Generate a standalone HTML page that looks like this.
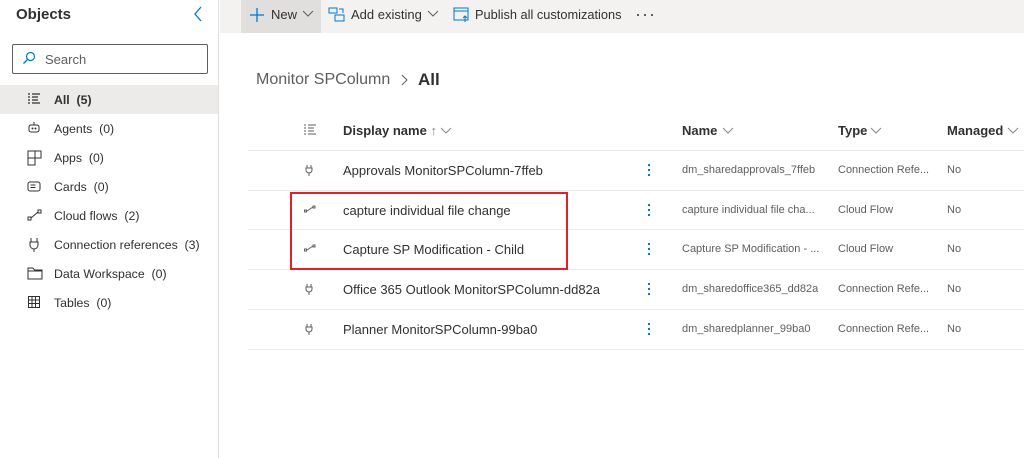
<!DOCTYPE html>
<html><head><style>
*{margin:0;padding:0;box-sizing:border-box}
body{width:1024px;height:458px;overflow:hidden;background:#fff;font-family:"Liberation Sans",sans-serif;color:#323130;position:relative;font-size:13px}
.a{position:absolute;white-space:nowrap}
.side{position:absolute;left:0;top:0;width:219px;height:458px;border-right:1px solid #e1dfdd;background:#fff}
.item{position:absolute;left:0;width:218px;height:29px;font-size:12.3px}
.item span{position:absolute;left:54px;top:8px}
.item svg{position:absolute;left:27px;top:7px}
.tb{position:absolute;left:220px;top:0;width:804px;height:33px;background:#f3f2f1}
.hl{position:absolute;left:248px;width:776px;height:1px;background:#edebe9}
.dots{position:absolute;width:3px;font-size:0}
.dots i{display:block;width:2px;height:2px;background:#0078d4;margin-bottom:3px}
.cell{font-size:11px;color:#605e5c}
</style></head><body>
<div class="side">
<div class="a" style="left:16px;top:6px;font-size:15px;font-weight:bold">Objects</div>
<svg class="a" style="left:193px;top:6px" width="10" height="16"><path d="M8 1L2 8l6 7" stroke="#0078d4" stroke-width="1.3" fill="none"/></svg>
<div class="a" style="left:12px;top:44px;width:196px;height:30px;border:1px solid #605e5c;border-radius:2px"></div>
<svg class="a" style="left:22px;top:51px" width="14" height="14"><circle cx="8.5" cy="5.5" r="4" stroke="#0078d4" stroke-width="1.2" fill="none"/><path d="M5.5 8.5L1.5 12.5" stroke="#0078d4" stroke-width="1.3"/></svg>
<div class="a" style="left:45px;top:52px;color:#605e5c">Search</div>
<div class="item" style="top:85px;background:#edebe9"><svg width="14" height="14"><path d="M1 2h2M1 5h2M1 8h2M1 11h2M5 2h8M5 5h6M5 8h6M5 11h8" stroke="#323130" stroke-width="1.2"/></svg><span style="font-weight:bold">All&nbsp; (5)</span></div>
<div class="item" style="top:114px"><svg width="14" height="14"><rect x="2" y="4" width="10" height="7" rx="2" stroke="#323130" fill="none"/><circle cx="5.5" cy="7.5" r="1" fill="#323130"/><circle cx="8.5" cy="7.5" r="1" fill="#323130"/><path d="M7 1v3" stroke="#323130"/></svg><span>Agents&nbsp; (0)</span></div>
<div class="item" style="top:143px"><svg width="16" height="16"><path d="M1 1h13v7H8v7H1zM1 8h7M8 1v7" stroke="#323130" fill="none"/></svg><span>Apps&nbsp; (0)</span></div>
<div class="item" style="top:172px"><svg width="14" height="14"><rect x="1" y="3" width="12" height="9" rx="2" stroke="#323130" fill="none"/><path d="M3.5 6h5M3.5 8.5h5" stroke="#323130"/></svg><span>Cards&nbsp; (0)</span></div>
<div class="item" style="top:201px"><svg width="16" height="14"><rect x="1" y="9" width="3" height="3" stroke="#323130" fill="none"/><rect x="11" y="2" width="3" height="3" stroke="#323130" fill="none"/><path d="M4 10L11 4" stroke="#323130"/></svg><span>Cloud flows&nbsp; (2)</span></div>
<div class="item" style="top:230px"><svg width="14" height="16"><path d="M4 1v4M10 1v4M3 5h8v3a4 4 0 0 1-8 0zM7 12v3" stroke="#323130" fill="none"/></svg><span>Connection references&nbsp; (3)</span></div>
<div class="item" style="top:259px"><svg width="16" height="14"><path d="M1 2h5l1.5 2H15v9H1z" stroke="#323130" fill="none"/><path d="M1 5h14" stroke="#323130"/></svg><span>Data Workspace&nbsp; (0)</span></div>
<div class="item" style="top:288px"><svg width="14" height="14"><rect x="1.5" y="1.5" width="11" height="11" stroke="#323130" fill="none"/><path d="M1.5 5h11M1.5 8.5h11M5 1.5v11M8.5 1.5v11" stroke="#323130"/></svg><span>Tables&nbsp; (0)</span></div>
</div>
<div class="tb"></div>
<div class="a" style="left:241px;top:0;width:80px;height:33px;background:#e1dfdd"></div>
<svg class="a" style="left:249px;top:7px" width="16" height="16"><path d="M8 1v14M1 8h14" stroke="#0078d4" stroke-width="1.3"/></svg>
<div class="a" style="left:271px;top:7px">New</div>
<svg class="a" style="left:302px;top:10px" width="12" height="8"><path d="M1 1l5 5 5-5" stroke="#605e5c" fill="none"/></svg>
<svg class="a" style="left:328px;top:6px" width="18" height="18"><rect x="1" y="2" width="8" height="5" stroke="#0078d4" fill="none"/><rect x="7" y="9" width="9" height="6" stroke="#0078d4" fill="none"/><path d="M11 3h4v4" stroke="#0078d4" fill="none"/></svg>
<div class="a" style="left:351px;top:7px">Add existing</div>
<svg class="a" style="left:427px;top:10px" width="12" height="8"><path d="M1 1l5 5 5-5" stroke="#605e5c" fill="none"/></svg>
<svg class="a" style="left:453px;top:6px" width="18" height="18"><rect x="1" y="2" width="14" height="12" stroke="#0078d4" fill="none"/><path d="M1 5h14M12 10v6M10 12l2-2 2 2" stroke="#0078d4" fill="none"/></svg>
<div class="a" style="left:475px;top:7px;font-size:12.8px">Publish all customizations</div>
<div class="a" style="left:637px;top:14px;width:2px;height:2px;background:#605e5c"></div>
<div class="a" style="left:644px;top:14px;width:2px;height:2px;background:#605e5c"></div>
<div class="a" style="left:651px;top:14px;width:2px;height:2px;background:#605e5c"></div>

<div class="a" style="left:256px;top:71px;font-size:16px;color:#605e5c">Monitor SPColumn</div>
<svg class="a" style="left:401px;top:74px" width="8" height="12"><path d="M1 1l5 5-5 5" stroke="#605e5c" fill="none"/></svg>
<div class="a" style="left:418px;top:70px;font-size:17px;font-weight:bold">All</div>

<svg class="a" style="left:303px;top:123px" width="14" height="14"><path d="M1 2h2M1 5h2M1 8h2M1 11h2M5 2h8M5 5h6M5 8h6M5 11h8" stroke="#605e5c" stroke-width="1.1"/></svg>
<div class="a" style="left:343px;top:123px;font-weight:bold;font-size:13px">Display name <span style="font-weight:normal;color:#8a8886">↑</span></div>
<svg class="a" style="left:440px;top:127px" width="12" height="8"><path d="M1 1l5 5 5-5" stroke="#8a8886" fill="none"/></svg>
<div class="a" style="left:682px;top:123px;font-weight:bold">Name</div>
<svg class="a" style="left:722px;top:127px" width="12" height="8"><path d="M1 1l5 5 5-5" stroke="#8a8886" fill="none"/></svg>
<div class="a" style="left:838px;top:123px;font-weight:bold">Type</div>
<svg class="a" style="left:870px;top:127px" width="12" height="8"><path d="M1 1l5 5 5-5" stroke="#8a8886" fill="none"/></svg>
<div class="a" style="left:947px;top:123px;font-weight:bold">Managed</div>
<svg class="a" style="left:1007px;top:127px" width="12" height="8"><path d="M1 1l5 5 5-5" stroke="#8a8886" fill="none"/></svg>

<div class="hl" style="top:150px"></div><div class="hl" style="top:190px"></div><div class="hl" style="top:229px"></div><div class="hl" style="top:269px"></div><div class="hl" style="top:309px"></div><div class="hl" style="top:349px"></div>

<svg class="a" style="left:305px;top:164px" width="8" height="12"><path d="M2 1v3M6 1v3M1 4h6v2a3 3 0 0 1-6 0zM4 9v3" stroke="#605e5c" fill="none"/></svg>
<div class="a" style="left:343px;top:163px">Approvals MonitorSPColumn-7ffeb</div>
<div class="dots" style="left:648px;top:164px"><i></i><i></i><i></i></div>
<div class="a cell" style="left:682px;top:164px">dm_sharedapprovals_7ffeb</div>
<div class="a cell" style="left:838px;top:164px">Connection Refe...</div>
<div class="a cell" style="left:947px;top:164px">No</div>

<svg class="a" style="left:304px;top:205px" width="12" height="8"><rect x="0.5" y="5" width="2" height="2" stroke="#605e5c" fill="none"/><rect x="9" y="1" width="2" height="2" stroke="#605e5c" fill="none"/><path d="M3 6l6-4" stroke="#605e5c"/></svg>
<div class="a" style="left:343px;top:203px">capture individual file change</div>
<div class="dots" style="left:648px;top:204px"><i></i><i></i><i></i></div>
<div class="a cell" style="left:682px;top:204px">capture individual file cha...</div>
<div class="a cell" style="left:838px;top:204px">Cloud Flow</div>
<div class="a cell" style="left:947px;top:204px">No</div>

<svg class="a" style="left:304px;top:244px" width="12" height="8"><rect x="0.5" y="5" width="2" height="2" stroke="#605e5c" fill="none"/><rect x="9" y="1" width="2" height="2" stroke="#605e5c" fill="none"/><path d="M3 6l6-4" stroke="#605e5c"/></svg>
<div class="a" style="left:343px;top:242px">Capture SP Modification - Child</div>
<div class="dots" style="left:648px;top:243px"><i></i><i></i><i></i></div>
<div class="a cell" style="left:682px;top:243px">Capture SP Modification - ...</div>
<div class="a cell" style="left:838px;top:243px">Cloud Flow</div>
<div class="a cell" style="left:947px;top:243px">No</div>

<svg class="a" style="left:305px;top:283px" width="8" height="12"><path d="M2 1v3M6 1v3M1 4h6v2a3 3 0 0 1-6 0zM4 9v3" stroke="#605e5c" fill="none"/></svg>
<div class="a" style="left:343px;top:282px">Office 365 Outlook MonitorSPColumn-dd82a</div>
<div class="dots" style="left:648px;top:283px"><i></i><i></i><i></i></div>
<div class="a cell" style="left:682px;top:283px">dm_sharedoffice365_dd82a</div>
<div class="a cell" style="left:838px;top:283px">Connection Refe...</div>
<div class="a cell" style="left:947px;top:283px">No</div>

<svg class="a" style="left:305px;top:323px" width="8" height="12"><path d="M2 1v3M6 1v3M1 4h6v2a3 3 0 0 1-6 0zM4 9v3" stroke="#605e5c" fill="none"/></svg>
<div class="a" style="left:343px;top:322px">Planner MonitorSPColumn-99ba0</div>
<div class="dots" style="left:648px;top:323px"><i></i><i></i><i></i></div>
<div class="a cell" style="left:682px;top:323px">dm_sharedplanner_99ba0</div>
<div class="a cell" style="left:838px;top:323px">Connection Refe...</div>
<div class="a cell" style="left:947px;top:323px">No</div>

<div class="a" style="left:290px;top:192px;width:278px;height:78px;border:2px solid #e0202a"></div>
</body></html>
